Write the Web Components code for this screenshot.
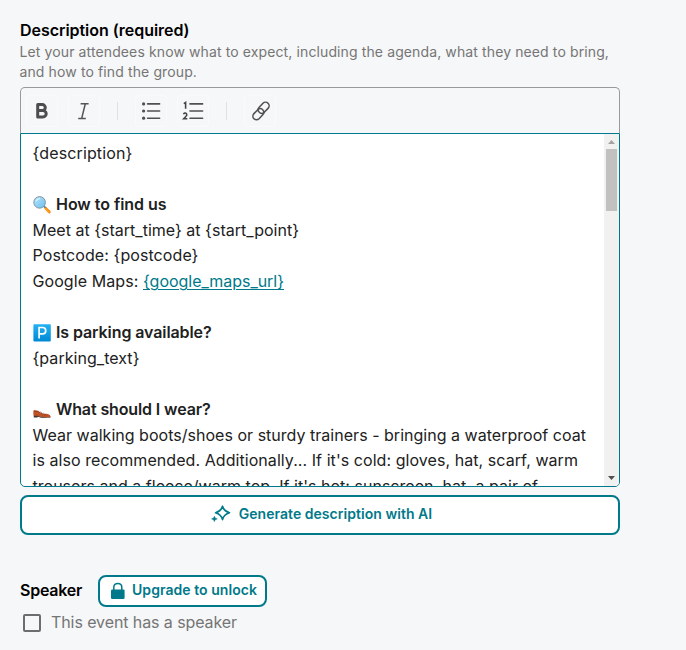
<!DOCTYPE html>
<html lang="en">
<head>
<meta charset="utf-8">
<title>Event description</title>
<style>
body{margin:0;background:#f6f7f8;font-family:Inter,"Liberation Sans",sans-serif;font-size:16px;color:#212121}
</style>
</head>
<body>
<event-form></event-form>
<script>
function define(name, html, setup) {
  const template = document.createElement('template');
  template.innerHTML = html;
  customElements.define(name, class extends HTMLElement {
    connectedCallback() {
      if (this.shadowRoot) return;
      this.attachShadow({ mode: 'open' }).append(template.content.cloneNode(true));
      if (setup) setup(this, this.shadowRoot);
    }
  });
}

/* A single line of text, tracked to occupy the given measure. */
define('text-line', `<style>
:host{display:inline-block;white-space:pre}
:host([underlined]) span{text-decoration:underline;text-decoration-thickness:1px;text-underline-offset:2px}
span{display:inline-block}
</style><span><slot></slot></span>`, (host, root) => {
  const span = root.querySelector('span');
  const target = Number(host.getAttribute('measure'));
  const natural = span.getBoundingClientRect().width;
  const count = host.textContent.length;
  span.style.letterSpacing = ((target - natural) / count) + 'px';
  host.style.width = target + 'px';
});

const icons = {
  bold: [32, '<path d="M11.7 9.6h4.6a3 3 0 0 1 0 6h-4.6zM11.7 15.6h5.3a3.2 3.2 0 0 1 0 6.4h-5.3z" fill="none" stroke="#4d4d4d" stroke-width="3" stroke-linejoin="round"/>'],
  italic: [32, '<path d="M12.6 8.7h8M10.2 23.4h7.6M17.3 8.7l-3.6 14.7" fill="none" stroke="#555" stroke-width="1.5"/>'],
  bullets: [32, '<g fill="#505050"><circle cx="8.6" cy="8.9" r="1.6"/><circle cx="8.6" cy="16" r="1.6"/><circle cx="8.6" cy="23.2" r="1.6"/></g><path d="M12.6 8.9h12M12.6 16h12M12.6 23.2h12" stroke="#505050" stroke-width="1.6" stroke-linecap="round"/>'],
  numbers: [32, '<path d="M13 8.9h12.6M13 16h12.6M13 23.2h12.6" stroke="#505050" stroke-width="1.6" stroke-linecap="round"/><path d="M6.8 8.6l1.8-1.1v6.2M6.4 19.1q1.8-1.8 3.1-.4 1 1.3-.7 2.8L6.7 23.7h3.6" fill="none" stroke="#444" stroke-width="1.55"/>'],
  link: [32, '<g fill="none" stroke="#505050" stroke-width="1.8" stroke-linecap="round" transform="translate(6.8 5.8) scale(.85)"><path d="M11 14.4a4.3 4.3 0 0 0 4.8-.9l4.5-4.6a4.2 4.2 0 0 0-6-6l-4.4 4.6a4.2 4.2 0 0 0-.1 5.8"/><path d="M13 9.6a4.3 4.3 0 0 0-4.8.9l-4.5 4.6a4.2 4.2 0 0 0 6 6l4.4-4.6a4.2 4.2 0 0 0 .1-5.8"/></g>'],
  search: [18, '<defs><linearGradient id="lens" x2="1" y2="1"><stop stop-color="#b9e7fc"/><stop offset="1" stop-color="#68bdf0"/></linearGradient></defs><path d="m10.5 11 1.2-1.2 2 1.7-1.5 1.5z" fill="#607d8b"/><path d="m11.3 12.8 1.9-1.8 4.2 4q.9 1-.1 2-1 1-2 .1z" fill="#f88b0c"/><path d="m12 12.1 4.3 4.6" stroke="#ffae28"/><circle cx="6.6" cy="6.4" r="5.8" fill="url(#lens)" stroke="#78909c" stroke-width=".9"/><path d="M3.1 5.2q1.1-2.5 3.7-2.6" fill="none" stroke="#e1f6ff" stroke-width="1.1"/>'],
  parking: [18, '<defs><linearGradient id="tile" x2="0" y2="1"><stop stop-color="#23b2f3"/><stop offset="1" stop-color="#0189d4"/></linearGradient></defs><rect x=".4" y=".2" width="17.4" height="17.2" rx=".8" fill="url(#tile)"/><path d="M6.1 14.4V3.5h3.5a3.15 3.15 0 0 1 0 6.3H6.1" fill="none" stroke="#fff" stroke-width="1.7"/>'],
  shoe: [18, '<path d="M.6 9.6c1.3-.7 3.4-.3 4.8.5l2.2 1.3q2.3 1.2 5.4 1.3c2.3.1 4.2.8 4.5 2.5l-.2 1.1H8.4l-3-1.4H.7C.3 13.3.1 11.4.6 9.6z" fill="#bd5229"/><path d="M.8 9.8q2.3 1.4 4.7.4M12.4 13l-1.1 1.9" fill="none" stroke="#873817" stroke-width=".7"/><path d="m6.5 11.4 1-.6M8 12.2l.9-.6M9.5 12.9l.8-.7" stroke="#5d3429" stroke-width=".7"/><path d="M.7 14.7h4.4l3.1 1.2q5 .7 9.3-.2v.9q-5 .8-9.5.1l-3.1-1-.5.9H.8z" fill="#4b342e"/>'],
  sparkle: [20, '<path d="M11.5 2.2Q12.9 7.2 18.5 8.8 12.9 10.4 11.5 15.6 10.1 10.4 4.6 8.8 10.1 7.2 11.5 2.2Z" fill="none" stroke="#00798a" stroke-width="1.65" stroke-linejoin="round"/><path d="M3.4 12.2 4.2 14.1 6.2 14.9 4.2 15.7 3.4 17.6 2.6 15.7.6 14.9 2.6 14.1Z" fill="#00798a" stroke="#00798a" stroke-width=".5"/>'],
  lock: [16, '<rect x="2" y="7.4" width="13.6" height="9.7" rx="1.3" fill="#00798a"/><path d="M4.8 8V5.3c0-2.6 1.4-3.9 4-3.9s4 1.3 4 3.9V8" fill="none" stroke="#00798a" stroke-width="1.5"/>']
};
define('ui-icon', `<style>:host{display:block;flex:none}svg{display:block;overflow:visible}</style>`, (host, root) => {
  const [size, shapes] = icons[host.getAttribute('name')];
  root.innerHTML += `<svg width="${size}" height="${size}" viewBox="0 0 ${size} ${size}">${shapes}</svg>`;
});

define('tool-button', `<style>
:host{display:block;box-sizing:border-box;width:32px;height:32px;border-radius:4px;box-shadow:inset 0 0 0 1px #f9fafb}
</style><slot></slot>`);

define('editor-toolbar', `<style>
:host{display:flex;align-items:center;gap:10px;box-sizing:border-box;height:46px;padding:0 5px 0;border:1px solid #97999b;border-bottom:0;border-radius:5px 5px 0 0}
i{width:1px;height:18px;margin:0 7px;background:#dfe1e3}
</style>
<tool-button><ui-icon name="bold"></ui-icon></tool-button>
<tool-button><ui-icon name="italic"></ui-icon></tool-button><i></i>
<tool-button><ui-icon name="bullets"></ui-icon></tool-button>
<tool-button><ui-icon name="numbers"></ui-icon></tool-button><i></i>
<tool-button><ui-icon name="link"></ui-icon></tool-button>`);

define('scroll-rail', `<style>
:host{display:flex;flex-direction:column;align-items:center;width:15px;flex:none;background:#f1f1f1}
.thumb{width:11px;height:62px;background:#c1c1c1}
svg{display:block;width:15px;height:15px}
.down{margin-top:auto}
</style><svg><path d="M4 10h7L7.5 6z" fill="#a3a3a3"/></svg><div class="thumb"></div><svg class="down"><path d="M4 5h7L7.5 9z" fill="#505050"/></svg>`);

define('editor-row', `<style>
:host{display:flex;align-items:center;height:25.6px;line-height:25.6px}
::slotted(ui-icon){margin-right:5.5px}
:host([heading]){font-weight:600}
</style><slot></slot>`);

define('editor-body', `<style>
:host{display:flex;box-sizing:border-box;height:354px;border:1px solid #00798a;border-radius:0 0 5px 5px;background:#fff;overflow:hidden}
.content{flex:1;padding:7px 12px 0 11.5px;overflow:hidden}
a{color:#00798a}
</style>
<div class="content">
<editor-row><text-line measure="100">{description}</text-line></editor-row>
<editor-row></editor-row>
<editor-row heading><ui-icon name="search"></ui-icon><text-line measure="110.5">How to find us</text-line></editor-row>
<editor-row><text-line measure="266.5">Meet at {start_time} at {start_point}</text-line></editor-row>
<editor-row><text-line measure="166">Postcode: {postcode}</text-line></editor-row>
<editor-row><text-line measure="110.5">Google Maps: </text-line><a><text-line underlined measure="141">{google_maps_url}</text-line></a></editor-row>
<editor-row></editor-row>
<editor-row heading><ui-icon name="parking"></ui-icon><text-line measure="155.5">Is parking available?</text-line></editor-row>
<editor-row><text-line measure="107">{parking_text}</text-line></editor-row>
<editor-row></editor-row>
<editor-row heading><ui-icon name="shoe"></ui-icon><text-line measure="154.5">What should I wear?</text-line></editor-row>
<editor-row><text-line measure="553.5">Wear walking boots/shoes or sturdy trainers - bringing a waterproof coat</text-line></editor-row>
<editor-row><text-line measure="545.5">is also recommended. Additionally... If it's cold: gloves, hat, scarf, warm</text-line></editor-row>
<editor-row><text-line measure="505.5">trousers and a fleece/warm top. If it's hot: sunscreen, hat, a pair of</text-line></editor-row>
</div><scroll-rail></scroll-rail>`);

define('outline-button', `<style>
:host{display:flex;align-items:center;justify-content:center;box-sizing:border-box;border:2px solid #00798a;border-radius:8px;background:#fff;color:#00798a;font-weight:600;font-size:14px;line-height:20px}
</style><slot></slot>`);

define('check-field', `<style>
:host{display:flex;align-items:center;gap:10px;color:#757575;line-height:24px}
.box{box-sizing:border-box;width:18px;height:18px;border:2px solid #6b6d70;border-radius:2px;position:relative;top:1px}
</style><div class="box"></div><slot></slot>`);

define('event-form', `<style>
:host{display:block;box-sizing:border-box;width:640px;height:650px;padding:20px 20px 0;background:#f6f7f8}
.label{font-weight:600;color:#000;line-height:20px}
.hint{display:flex;flex-direction:column;font-size:14px;line-height:20px;color:#757575;padding:2px 0 5px;margin-left:-.5px}
.generate{margin-top:8px;height:40px;gap:8px;padding-left:3px;padding-bottom:2px}
.speaker{display:flex;align-items:center;gap:16px;margin-top:40px}
.speaker .label{padding-bottom:2px}
.upgrade{width:169px;height:32px;gap:7px;padding:0 0 2px 1px}
check-field{margin:3px 0 0 3px}
</style>
<div class="label"><text-line measure="169.5">Description (required)</text-line></div>
<div class="hint"><text-line measure="589.5">Let your attendees know what to expect, including the agenda, what they need to bring,</text-line><text-line measure="177.5">and how to find the group.</text-line></div>
<editor-toolbar></editor-toolbar>
<editor-body></editor-body>
<outline-button class="generate"><ui-icon name="sparkle"></ui-icon><text-line measure="193.5">Generate description with AI</text-line></outline-button>
<div class="speaker"><span class="label"><text-line measure="62">Speaker</text-line></span><outline-button class="upgrade"><ui-icon name="lock"></ui-icon><text-line measure="125">Upgrade to unlock</text-line></outline-button></div>
<check-field><text-line measure="186">This event has a speaker</text-line></check-field>`);
</script>
</body>
</html>
